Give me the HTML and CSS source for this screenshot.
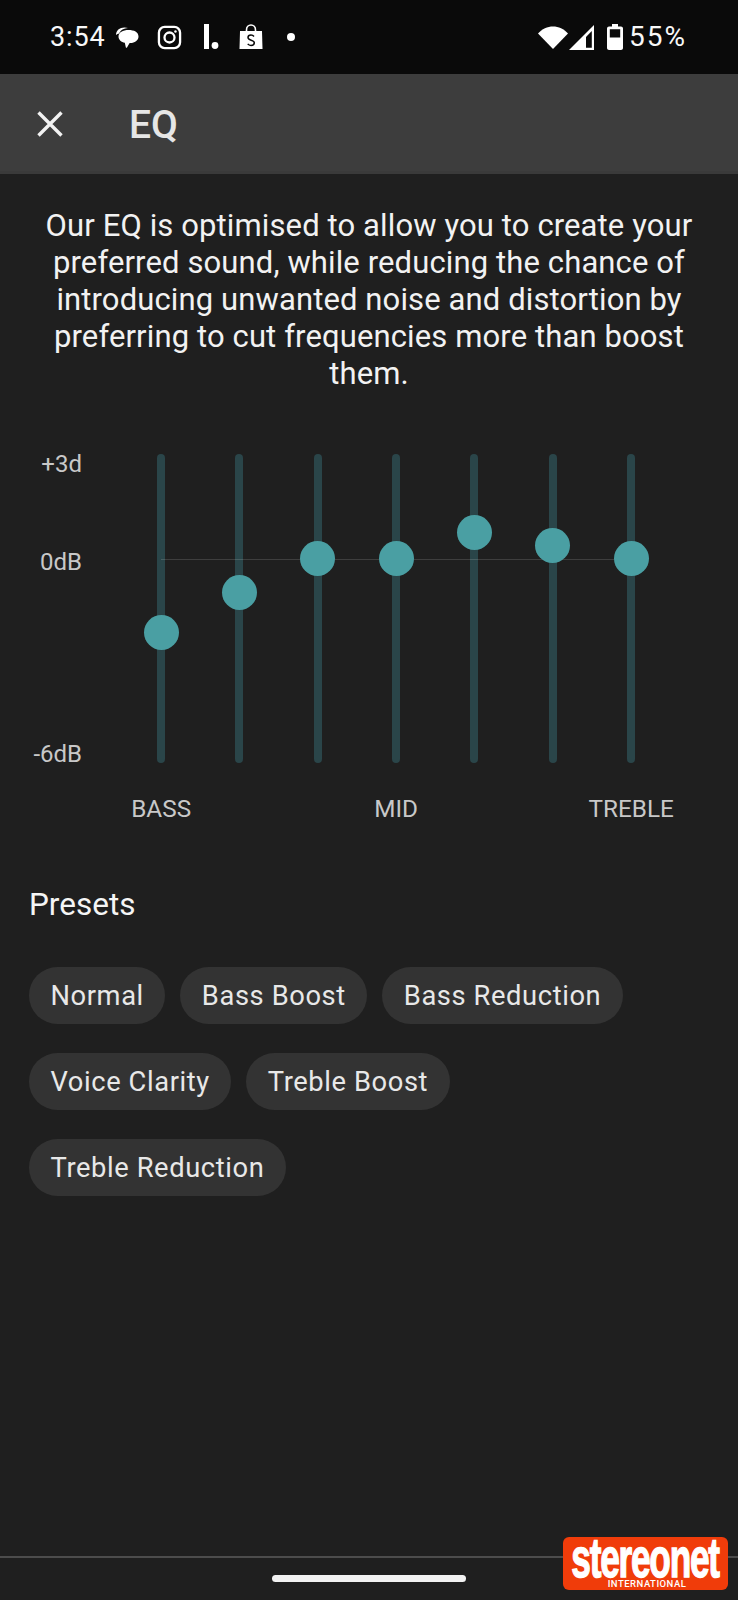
FILE: index.html
```html
<!DOCTYPE html>
<html lang="en">
<head>
<meta charset="utf-8">
<title>EQ</title>
<link rel="stylesheet" href="styles.css">
</head>
<body>
<div class="screen">
  <header class="status">
    <span class="time">3:54</span>
    <svg class="ic ic-chat" width="24" height="24" viewBox="0 0 24 24"><path fill="#fff" d="M1 10c0-4.500 3.500-7.500 8.500-7.500 1.200 0 2.400.2 3.500.6C9 3.500 5.500 5 4.200 8.500 3 8.800 1.900 9.300 1 10z"/><path fill="#fff" d="M13.500 5c5.500 0 10 2 10 6.500 0 4-4 6.500-8 6.500-.6 0-1 .1-1.200.5L12 22.500c-.5.6-1 .4-1.200-.2l-1-4.500C6.500 17 3.500 15 3.500 11.500 3.500 7.200 8 5 13.500 5z"/></svg>
    <svg class="ic ic-insta" width="25" height="25" viewBox="0 0 26 26" fill="none" stroke="#fff" stroke-width="2.400"><rect x="2" y="2" width="22" height="22" rx="6"/><circle cx="13" cy="13" r="5.200"/><circle cx="19.200" cy="6.800" r="1.300" fill="#fff" stroke="none"/></svg>
    <svg class="ic ic-i" width="16" height="26" viewBox="0 0 16 26"><rect x="1" y="0" width="5" height="25" fill="#fff"/><circle cx="12" cy="21.500" r="3.400" fill="#fff"/></svg>
    <svg class="ic ic-bag" width="24" height="26" viewBox="0 0 24 26"><path fill="#fff" d="M1 7h22l.5 18H.5z"/><path fill="none" stroke="#fff" stroke-width="1.600" d="M7.500 7.500V6c0-3 2-5 4.500-5s4.500 2 4.500 5v1.500"/><path fill="none" stroke="#0a0a0a" stroke-width="1.500" d="M15 12.500c-.8-1-1.800-1.400-3-1.400-1.700 0-3 1-3 2.500 0 3.300 6.300 2 6.300 5.200 0 1.500-1.400 2.600-3.300 2.600-1.300 0-2.500-.5-3.300-1.500"/></svg>
    <span class="dot"></span>
    <span class="status-spacer"></span>
    <svg class="ic ic-wifi" width="30" height="24" viewBox="0 0 30 24"><path fill="#fff" d="M0 8.500C4 4 9.500 1.500 15 1.500S26 4 30 8.500L15 24z"/></svg>
    <svg class="ic ic-signal" width="25" height="25" viewBox="0 0 25 25"><path fill="#fff" fill-rule="evenodd" d="M25 0v25H0zM22.800 6l-5.800 6v10.800h5.800z"/></svg>
    <svg class="ic ic-batt" width="16" height="26" viewBox="0 0 16 26"><path fill="#fff" fill-rule="evenodd" d="M5 0h6v2.500h3c1 0 2 .8 2 2V24c0 1-1 2-2 2H2c-1 0-2-1-2-2V4.500c0-1.200 1-2 2-2h3zM2.800 5.200v8.300h10.400V5.200z"/></svg>
    <span class="pct">55%</span>
  </header>

  <div class="appbar">
    <svg class="close" width="28" height="28" viewBox="0 0 28 28"><path d="M2.500 2.500l23 23M25.500 2.500l-23 23" stroke="#f2f2f2" stroke-width="3.400" fill="none"/></svg>
    <h1 class="title">EQ</h1>
  </div>

  <main class="content">
    <p class="intro">Our EQ is optimised to allow you to create your preferred sound, while reducing the chance of introducing unwanted noise and distortion by preferring to cut frequencies more than boost them.</p>

    <section class="eq">
      <div class="scale">
        <span class="scale-plus">+3d</span>
        <span class="scale-zero">0dB</span>
        <span class="scale-minus">-6dB</span>
      </div>
      <div class="bands-wrap">
        <div class="bands">
          <div class="zero-line"></div>
          <div class="band"><div class="track"></div><div class="thumb" style="top:160.500px"></div></div>
          <div class="band"><div class="track"></div><div class="thumb" style="top:120.500px"></div></div>
          <div class="band"><div class="track"></div><div class="thumb" style="top:86.500px"></div></div>
          <div class="band"><div class="track"></div><div class="thumb" style="top:86.500px"></div></div>
          <div class="band"><div class="track"></div><div class="thumb" style="top:60.500px"></div></div>
          <div class="band"><div class="track"></div><div class="thumb" style="top:73.500px"></div></div>
          <div class="band"><div class="track"></div><div class="thumb" style="top:86.500px"></div></div>
        </div>
        <div class="band-labels">
          <span class="band-label">BASS</span>
          <span class="band-label"></span>
          <span class="band-label"></span>
          <span class="band-label">MID</span>
          <span class="band-label"></span>
          <span class="band-label"></span>
          <span class="band-label">TREBLE</span>
        </div>
      </div>
    </section>

    <h2 class="presets-title">Presets</h2>
    <div class="chips">
      <span class="chip">Normal</span>
      <span class="chip">Bass Boost</span>
      <span class="chip">Bass Reduction</span>
      <span class="chip">Voice Clarity</span>
      <span class="chip">Treble Boost</span>
      <span class="chip">Treble Reduction</span>
    </div>
  </main>

  <footer class="navbar"><div class="home"></div></footer>

  <div class="logo">
    <span class="logo-main">stereonet</span>
    <span class="logo-sub">INTERNATIONAL</span>
  </div>
</div>
</body>
</html>
```
FILE: styles.css
```css
* { box-sizing: border-box; }
html, body { margin: 0; padding: 0; }
body { background: #1f1f1f; font-family: Roboto, "Noto Sans", sans-serif; color: #fff; }
.screen { position: relative; width: 738px; height: 1600px; display: flex; flex-direction: column; overflow: hidden; background: #1f1f1f; }

.status { height: 74px; flex: none; background: #0a0a0a; display: flex; align-items: center; padding: 0 51px 0 50px; }
.time { font-size: 27px; font-weight: 400; letter-spacing: .9px; color: #f8f8f8; margin-top: -1px; }
.pct { font-size: 28px; letter-spacing: 2px; color: #f8f8f8; margin-left: 6px; margin-top: -1px; }
.ic { display: block; flex: none; }
.ic-chat { margin-left: 9px; }
.ic-insta { margin-left: 18px; }
.ic-i { margin-left: 21px; }
.ic-bag { margin-left: 20px; }
.dot { width: 8px; height: 8px; border-radius: 50%; background: #fff; margin-left: 24px; }
.status-spacer { flex: 1; }
.ic-signal { margin-left: 1px; }
.ic-batt { margin-left: 13px; }

.appbar { height: 100px; flex: none; background: #3d3d3d; border-bottom: 3px solid #3a3a3a; display: flex; align-items: center; padding: 2px 0 0 36px; }
.title { margin: 4px 0 0 65px; font-size: 39px; font-weight: 500; color: #e6e6e6; line-height: 1; }

.content { flex: 1; display: flex; flex-direction: column; }
.intro { margin: 33px 29px 0; font-size: 31px; line-height: 37px; text-align: center; color: #f2f2f2; letter-spacing: .12px; }

.eq { display: flex; margin-top: 62px; height: 372px; }
.scale { width: 82px; flex: none; height: 320px; font-size: 24px; color: #c8c8c8; display: flex; flex-direction: column; align-items: flex-end; }
.scale span { display: block; line-height: 26px; }
.scale-plus { margin-top: -3px; }
.scale-zero { margin-top: 72px; }
.scale-minus { margin-top: 166px; }

.bands-wrap { margin-left: 40px; width: 548px; display: flex; flex-direction: column; }
.bands { position: relative; display: flex; height: 309px; }
.band { position: relative; width: 78.330px; flex: none; height: 309px; display: flex; justify-content: center; }
.track { width: 8px; height: 100%; border-radius: 4px; background: #2a4549; }
.thumb { position: absolute; z-index: 2; left: 50%; width: 35px; height: 35px; margin-left: -17.500px; border-radius: 50%; background: #4a9fa3; }
.zero-line { position: absolute; z-index: 1; left: 39px; width: 470px; top: 105px; height: 1px; background: rgba(255, 255, 255, .14); }
.band-labels { display: flex; margin-top: 33px; }
.band-label { width: 78.330px; flex: none; text-align: center; font-size: 24.300px; line-height: 26px; color: #c8c8c8; white-space: nowrap; display: flex; justify-content: center; }

.presets-title { margin: 62px 0 0 29px; font-size: 31.500px; font-weight: 400; line-height: 34px; color: #f5f5f5; }
.chips { margin: 45px 100px 0 29px; display: flex; flex-wrap: wrap; gap: 29px 15px; }
.chip { height: 57px; padding: 1px 21.500px 0; border-radius: 29px; background: #333333; color: #e8e8e8; font-size: 27.300px; letter-spacing: .6px; line-height: 56px; }

.navbar { flex: none; height: 44px; border-top: 2px solid #4c4c4c; display: flex; justify-content: center; padding-top: 17px; }
.home { width: 194px; height: 7px; border-radius: 4px; background: #f2f2f2; }

.logo { position: absolute; left: 563px; top: 1537px; width: 165px; height: 53px; border-radius: 6px; background: #f03c0a; display: flex; flex-direction: column; align-items: center; }
.logo-main { font-family: "Liberation Sans", sans-serif; font-weight: 700; font-size: 56px; line-height: 41px; height: 41px; color: #fff; letter-spacing: -2px; transform: scaleX(.63); white-space: nowrap; -webkit-text-stroke: 1.400px #fff; }
.logo-sub { font-family: Roboto, sans-serif; font-weight: 500; font-size: 9.500px; line-height: 11px; letter-spacing: .5px; color: #fff; margin-left: 3px; }
```
